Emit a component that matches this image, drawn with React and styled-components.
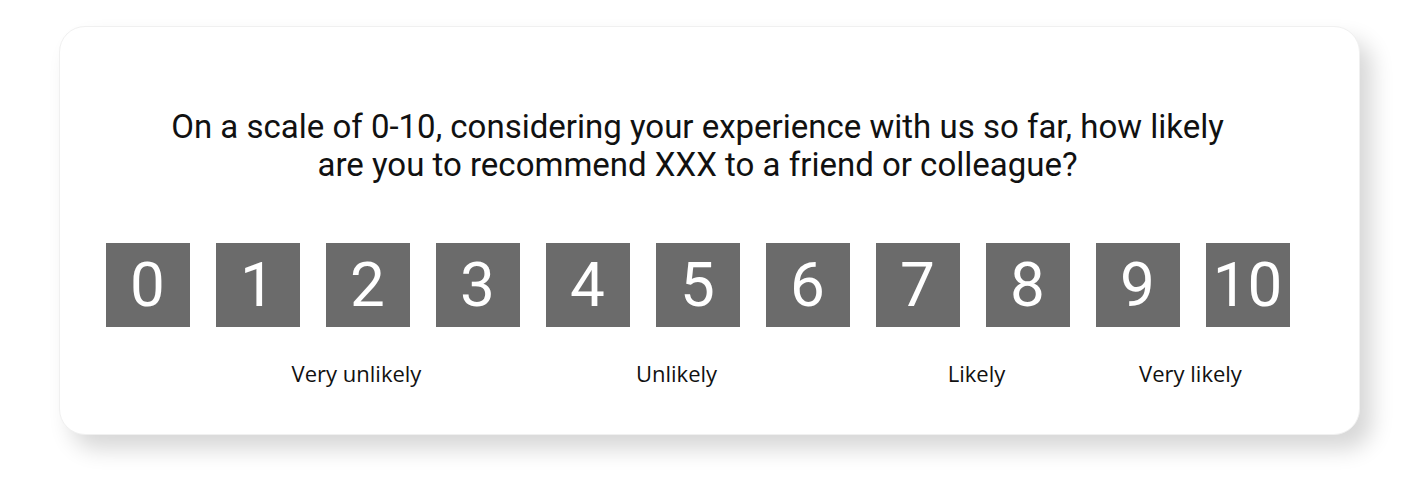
import React from 'react';
import styled, { createGlobalStyle } from 'styled-components';

const GlobalStyle = createGlobalStyle`
  html, body {
    margin: 0;
    padding: 0;
    background: #fff;
  }
  body {
    font-family: Roboto, "Liberation Sans", sans-serif;
    color: #111;
  }
`;

const Page = styled.div`
  width: 1418px;
  height: 492px;
  padding: 26px 0 0 59px;
  box-sizing: border-box;
`;

const Card = styled.div`
  width: 1301px;
  height: 409px;
  box-sizing: border-box;
  background: #fff;
  border: 1px solid #f0f0f0;
  border-radius: 26px;
  box-shadow: 12px 14px 22px rgba(0, 0, 0, 0.16);
  padding: 81px 70px 0 46px;
  display: flex;
  flex-direction: column;
  align-items: center;
`;

const Question = styled.p`
  margin: 0;
  font-size: 33px;
  line-height: 38px;
  text-align: center;
  color: #111;
  white-space: nowrap;
`;

const Scale = styled.div`
  display: grid;
  grid-template-columns: repeat(11, 84px);
  column-gap: 26px;
  margin-top: 59px;
`;

const ScoreBox = styled.button`
  width: 84px;
  height: 84px;
  border: none;
  padding: 0;
  background: #6b6b6b;
  color: #fff;
  font-family: Roboto, "Liberation Sans", sans-serif;
  font-size: 62px;
  line-height: 84px;
  text-align: center;
  cursor: pointer;
`;

const Labels = styled.div`
  display: flex;
  width: 1184px;
  margin-top: 31px;
`;

const Label = styled.span`
  flex: 0 0 200px;
  margin-left: ${p => p.$gap}px;
  text-align: center;
  font-family: "Open Sans", "Noto Sans", sans-serif;
  font-size: 22px;
  line-height: 30px;
  color: #111;
`;

const labels = [
  { text: 'Very unlikely', gap: 151 },
  { text: 'Unlikely', gap: 120 },
  { text: 'Likely', gap: 100 },
  { text: 'Very likely', gap: 14 },
];

const App = () => (
  <>
    <GlobalStyle />
    <Page>
      <Card>
        <Question>
          On a scale of 0-10, considering your experience with us so far, how likely
          <br />
          are you to recommend XXX to a friend or colleague?
        </Question>
        <Scale>
          {Array.from({ length: 11 }, (_, i) => (
            <ScoreBox key={i}>{i}</ScoreBox>
          ))}
        </Scale>
        <Labels>
          {labels.map(l => (
            <Label key={l.text} $gap={l.gap}>
              {l.text}
            </Label>
          ))}
        </Labels>
      </Card>
    </Page>
  </>
);

export default App;
